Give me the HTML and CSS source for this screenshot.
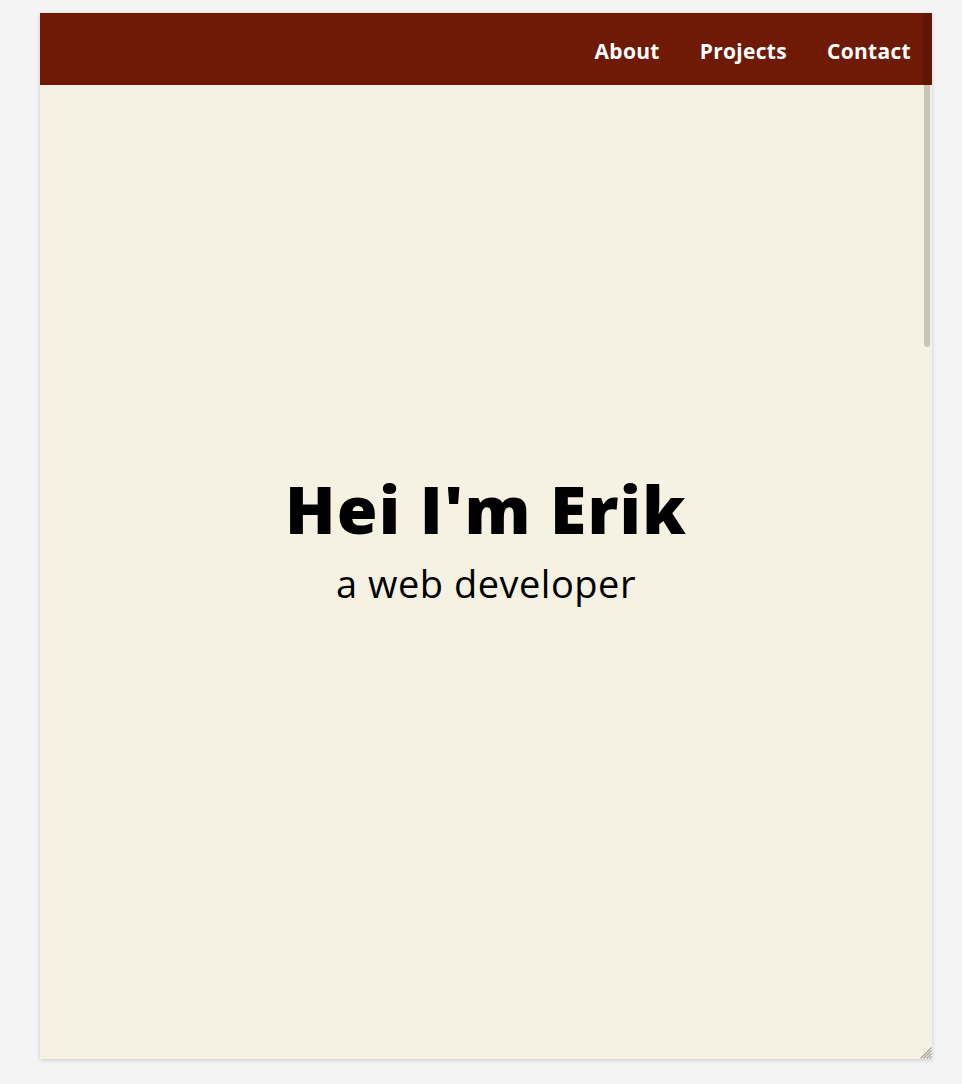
FILE: index.html
```html
<!DOCTYPE html>
<html lang="en">
<head>
<meta charset="utf-8">
<title>Erik</title>
<link rel="stylesheet" href="styles.css">
</head>
<body>
<div class="frame">
  <header class="nav">
    <a href="#about">About</a>
    <a href="#projects">Projects</a>
    <a href="#contact">Contact</a>
  </header>
  <main class="hero">
    <h1 class="title">Hei I'm Erik</h1>
    <p class="subtitle">a web developer</p>
  </main>
  <div class="scroll-track"></div>
  <div class="scroll-thumb"></div>
  <svg class="resize" width="13" height="13" viewBox="0 0 13 13">
    <path d="M12.5 1.5 L1.5 12.5 M12.5 4.5 L4.5 12.5 M12.5 7.5 L7.5 12.5 M12.5 10.5 L10.5 12.5" stroke="#a6a49c" stroke-width="1.2"/>
  </svg>
</div>
</body>
</html>
```
FILE: styles.css
```css
html, body {
  margin: 0;
  padding: 0;
}
body {
  background: #f4f4f4;
  font-family: "Comic Sans MS", "Open Sans", sans-serif;
  height: 1084px;
  overflow: hidden;
}
.frame {
  position: relative;
  margin: 13px 0 0 40px;
  width: 892px;
  height: 1046px;
  background: #f6f2e3;
  box-shadow: 0 1px 4px rgba(0,0,0,0.18);
  display: flex;
  flex-direction: column;
}
.nav {
  height: 72px;
  background: #6f1a07;
  display: flex;
  justify-content: flex-end;
  align-items: center;
  gap: 40px;
  padding: 3px 21px 0 0;
  box-sizing: border-box;
}
.nav a {
  color: #ffffff;
  text-decoration: none;
  font-weight: 700;
  font-size: 21px;
  letter-spacing: 0.3px;
}
.hero {
  flex: 1;
  display: flex;
  flex-direction: column;
  align-items: center;
  justify-content: center;
  padding-bottom: 67px;
}
.title {
  margin: 0;
  font-size: 66px;
  font-weight: 800;
  line-height: 1.1;
  color: #000;
  letter-spacing: 1.2px;
}
.subtitle {
  margin: 19px 0 0;
  font-size: 38px;
  line-height: 1.1;
  color: #000;
  letter-spacing: 0.5px;
}
.scroll-track {
  position: absolute;
  right: 1px;
  top: 0;
  width: 8px;
  height: 72px;
  background: rgba(0,0,0,0.15);
}
.scroll-thumb {
  position: absolute;
  right: 2px;
  top: 72px;
  width: 6px;
  height: 262px;
  border-radius: 0 0 3px 3px;
  background: #c8c4b6;
}
.resize {
  position: absolute;
  right: 0;
  bottom: 0;
}
```
